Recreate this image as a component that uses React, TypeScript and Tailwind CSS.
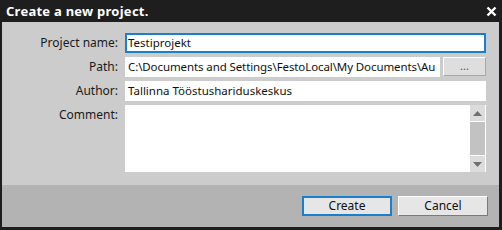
import React from "react";

const font = { fontFamily: '"Noto Sans", "Open Sans", sans-serif' };

function Label({ children }: { children: React.ReactNode }) {
  return (
    <div className="w-[116px] shrink-0 text-right text-[12px] leading-[20px] text-[#1a1a1a]">{children}</div>
  );
}

export default function App() {
  return (
    <div className="w-[502px] h-[230px] bg-[#1e1e1e] flex flex-col" style={font}>
      <div className="h-[22px] shrink-0 flex items-center justify-between pl-[6px] pr-[5px]">
        <span className="text-white font-bold text-[13px] tracking-[0.25px] leading-none">Create a new project.</span>
        <svg width="11" height="11" viewBox="0 0 11 11">
          <path d="M1.5 1.5 L9.5 9.5 M9.5 1.5 L1.5 9.5" stroke="#ffffff" strokeWidth="2.4" />
        </svg>
      </div>
      <div className="flex-1 ml-[2px] mr-[3px] mb-[3px] flex flex-col">
        <div className="h-[163px] bg-[#cccccc] pt-[11px] pr-[13px] flex flex-col gap-[4px]">
          <div className="flex h-[20px]">
            <Label>Project name:</Label>
            <div className="ml-[7px] flex-1 bg-white border-2 border-[#1b7fd0] flex items-center pl-[1px] text-[11.5px] text-[#111]">
              Testiprojekt
            </div>
          </div>
          <div className="flex h-[20px]">
            <Label>Path:</Label>
            <div className="ml-[7px] w-[315px] bg-white flex items-center pl-[3px] text-[11.5px] tracking-[-0.1px] text-[#111] overflow-hidden whitespace-nowrap">
              C:\Documents and Settings\FestoLocal\My Documents\Au
            </div>
            <div className="ml-[3px] flex-1 h-[19px] bg-[#dedede] border border-t-white border-l-white border-b-[#a8a8a8] border-r-[#a8a8a8] flex items-center justify-center text-[11px] text-[#555] leading-none pb-[2px]">
              ...
            </div>
          </div>
          <div className="flex h-[20px]">
            <Label>Author:</Label>
            <div className="ml-[7px] flex-1 bg-white flex items-center pl-[3px] text-[11.5px] text-[#111]">
              Tallinna Tööstushariduskeskus
            </div>
          </div>
          <div className="flex h-[67px]">
            <Label>Comment:</Label>
            <div className="ml-[7px] flex-1 bg-white flex justify-end">
              <div className="w-[17px] h-full flex flex-col border-l border-r border-white bg-white gap-[1px]">
                <div className="h-[16px] bg-[#dcdcdc] flex items-center justify-center">
                  <svg width="9" height="5" viewBox="0 0 9 5"><path d="M0 5 L4.5 0 L9 5 Z" fill="#707070" /></svg>
                </div>
                <div className="flex-1 bg-[#c2c2c2]" />
                <div className="h-[16px] bg-[#dcdcdc] flex items-center justify-center">
                  <svg width="9" height="5" viewBox="0 0 9 5"><path d="M0 0 L9 0 L4.5 5 Z" fill="#707070" /></svg>
                </div>
              </div>
            </div>
          </div>
        </div>
        <div className="flex-1 bg-[#b3b3b3] flex items-center justify-end pr-[11px] gap-[6px]">
          <div className="w-[90px] h-[20px] bg-[#e6e6e6] border-2 border-[#1b7fd0] flex items-center justify-center text-[12px] text-[#111]">
            Create
          </div>
          <div className="w-[90px] h-[20px] bg-[#e6e6e6] border border-t-white border-l-white border-b-[#7a7a7a] border-r-[#7a7a7a] flex items-center justify-center text-[12px] text-[#111]">
            Cancel
          </div>
        </div>
      </div>
    </div>
  );
}
